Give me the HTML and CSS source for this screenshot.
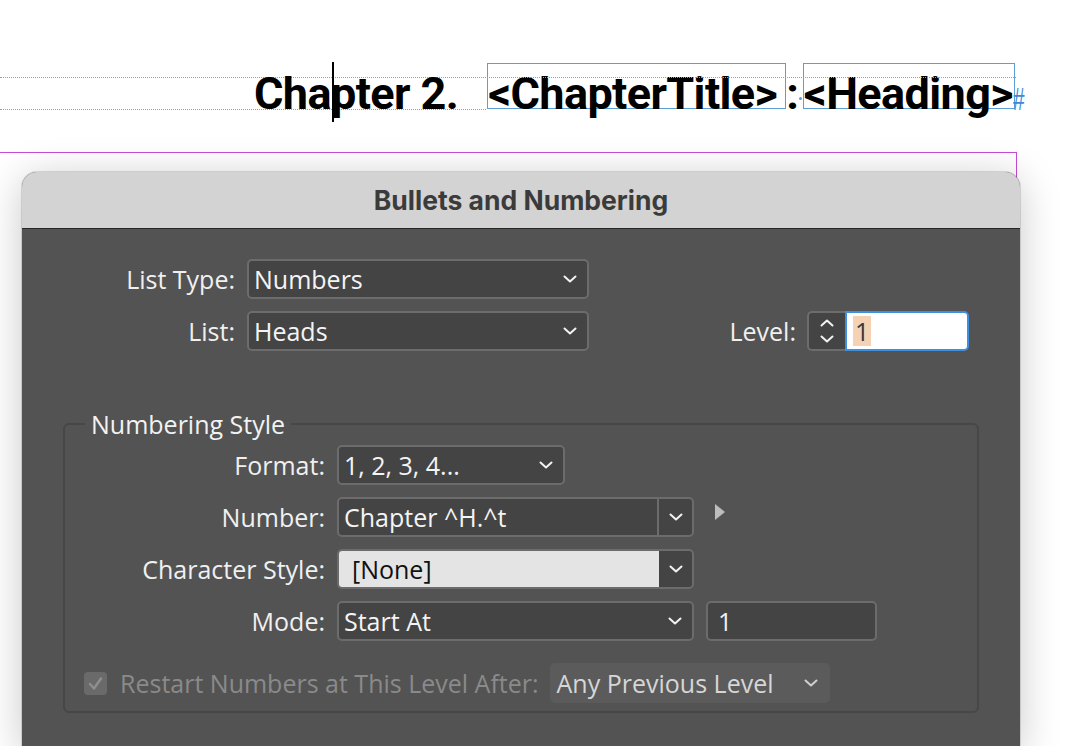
FILE: index.html
```html
<!DOCTYPE html>
<html>
<head>
<meta charset="utf-8">
<link rel="stylesheet" href="styles.css">
</head>
<body>
<div class="canvas">
  <div class="guide guide-top"></div>
  <div class="guide guide-base"></div>
  <div class="heading-line">
    <span class="htext">Cha<span class="caret"></span>pter 2.</span>
    <span class="frame frame-title">&lt;ChapterTitle&gt;</span>
    <span class="htext colon">:</span>
    <span class="dot"></span>
    <span class="frame frame-head">&lt;Heading&gt;</span>
    <span class="hash">#</span>
  </div>
</div>
<div class="margin-frame">
  <div class="dialog">
    <div class="titlebar">Bullets and Numbering</div>
    <div class="body">
      <div class="row">
        <div class="lbl">List Type:</div>
        <div class="select w342"><span>Numbers</span><svg class="chev" width="14" height="8" viewBox="0 0 14 8"><polyline points="1.5,1.5 7,6.5 12.5,1.5"/></svg></div>
      </div>
      <div class="row">
        <div class="lbl">List:</div>
        <div class="select w342"><span>Heads</span><svg class="chev" width="14" height="8" viewBox="0 0 14 8"><polyline points="1.5,1.5 7,6.5 12.5,1.5"/></svg></div>
        <div class="spacer"></div>
        <div class="lbl-inline">Level:</div>
        <div class="stepper">
          <svg width="14" height="8" viewBox="0 0 14 8"><polyline points="1.5,6.5 7,1.5 12.5,6.5"/></svg>
          <svg width="14" height="8" viewBox="0 0 14 8"><polyline points="1.5,1.5 7,6.5 12.5,1.5"/></svg>
        </div>
        <div class="level-input"><span class="sel">1</span></div>
      </div>

      <fieldset class="group">
        <legend>Numbering Style</legend>
        <div class="row">
          <div class="lbl2">Format:</div>
          <div class="select w228"><span>1, 2, 3, 4...</span><svg class="chev" width="14" height="8" viewBox="0 0 14 8"><polyline points="1.5,1.5 7,6.5 12.5,1.5"/></svg></div>
        </div>
        <div class="row">
          <div class="lbl2">Number:</div>
          <div class="combo">
            <div class="combo-field"><span>Chapter ^H.^t</span></div>
            <div class="combo-btn"><svg width="14" height="8" viewBox="0 0 14 8"><polyline points="1.5,1.5 7,6.5 12.5,1.5"/></svg></div>
          </div>
          <svg class="tri" width="10" height="16" viewBox="0 0 10 16"><polygon points="0,0 10,8 0,16"/></svg>
        </div>
        <div class="row">
          <div class="lbl2">Character Style:</div>
          <div class="combo">
            <div class="combo-field light"><span>[None]</span></div>
            <div class="combo-btn"><svg width="14" height="8" viewBox="0 0 14 8"><polyline points="1.5,1.5 7,6.5 12.5,1.5"/></svg></div>
          </div>
        </div>
        <div class="row">
          <div class="lbl2">Mode:</div>
          <div class="select w357"><span>Start At</span><svg class="chev" width="14" height="8" viewBox="0 0 14 8"><polyline points="1.5,1.5 7,6.5 12.5,1.5"/></svg></div>
          <div class="num-input"><span>1</span></div>
        </div>
        <div class="row row-check">
          <div class="checkbox"><svg width="23" height="23" viewBox="0 0 23 23"><polyline points="6,12 10,16.5 17,6.5"/></svg></div>
          <div class="check-label">Restart Numbers at This Level After:</div>
          <div class="select disabled w280"><span>Any Previous Level</span><svg class="chev" width="14" height="8" viewBox="0 0 14 8"><polyline points="1.5,1.5 7,6.5 12.5,1.5"/></svg></div>
        </div>
      </fieldset>
    </div>
  </div>
</div>
</body>
</html>
```

FILE: styles.css
```css
* { box-sizing: border-box; }
html, body { margin: 0; padding: 0; }
body {
  width: 1090px;
  height: 746px;
  overflow: hidden;
  background: #ffffff;
  font-family: "Open Sans", "Liberation Sans", sans-serif;
}

/* document canvas */
.canvas {
  position: relative;
  height: 152px;
  padding-top: 63px;
}
.guide {
  position: absolute;
  left: 0;
  height: 0;
  border-top: 1px dotted #7fa9bf;
}
.guide-top { top: 77px; width: 1016px; }
.guide-base { top: 109px; width: 486px; }

.heading-line {
  display: flex;
  align-items: flex-start;
  padding-left: 254px;
  font-family: Roboto, "Liberation Sans", sans-serif;
  font-weight: 700;
  font-size: 45px;
  letter-spacing: -0.6px;
  color: #000;
  line-height: 54px;
}
.htext {
  position: relative;
  display: block;
  height: 46px;
  padding-top: 4px;
  white-space: pre;
}
.caret {
  position: absolute;
  top: -1px;
  display: inline-block;
  width: 2px;
  height: 60px;
  background: #000;
  margin-left: 1px;
}
.frame {
  display: block;
  height: 46px;
  border: 1px solid #5b9fd6;
  padding-top: 3px;
  white-space: pre;
}
.frame-title { margin-left: 29px; width: 299px; }
.colon { margin-left: 0; letter-spacing: 0; }
.dot {
  display: block;
  width: 3px;
  height: 3px;
  border-radius: 50%;
  background: #5b9fd6;
  margin: 34px 1px 0 0;
}
.frame-head { width: 212px; }
.hash {
  display: block;
  font-family: "Liberation Sans", sans-serif;
  font-weight: 400;
  font-size: 32px;
  line-height: 32px;
  color: #3f88d6;
  margin: 20px 0 0 -2px;
  letter-spacing: 0;
  transform: scaleX(0.65);
  transform-origin: left center;
}

/* margin frame */
.margin-frame {
  width: 1017px;
  height: 594px;
  border-top: 1px solid #c64bd6;
  border-right: 1px solid #c64bd6;
  padding-top: 19px;
}

/* dialog */
.dialog {
  width: 998px;
  margin-left: 22px;
  border-radius: 15px 15px 0 0;
  overflow: hidden;
  box-shadow: 0 6px 40px rgba(0, 0, 0, 0.22), 0 0 0 1px rgba(0,0,0,0.12);
  background: #535353;
}
.titlebar {
  height: 57px;
  background: #d3d3d3;
  border-bottom: 1px solid #262626;
  display: flex;
  align-items: center;
  justify-content: center;
  font-family: Inter, "Liberation Sans", sans-serif;
  font-weight: 700;
  font-size: 26.5px;
  color: #3b3b3b;
}
.body {
  height: 520px;
  padding: 30px 51px 0 0;
  color: #f0f0f0;
  font-size: 25px;
}
.row {
  display: flex;
  align-items: center;
  height: 40px;
  margin-bottom: 12px;
}
.lbl {
  width: 213px;
  margin-right: 12px;
  text-align: right;
}
.spacer { flex: 1; }
.lbl-inline { margin-right: 11px; }

.select {
  height: 40px;
  border: 2px solid #6c6c6c;
  border-radius: 5px;
  background: #444444;
  display: flex;
  align-items: center;
  justify-content: space-between;
  padding: 0 10px 0 5px;
  color: #f4f4f4;
}
.select span { white-space: nowrap; }
svg polyline { fill: none; stroke: #f2f2f2; stroke-width: 2; stroke-linecap: round; stroke-linejoin: round; }
.chev { flex: none; }
.w342 { width: 342px; }
.w228 { width: 228px; }
.w357 { width: 357px; }
.w280 { width: 280px; }

.stepper {
  width: 38px;
  height: 40px;
  border: 2px solid #6c6c6c;
  border-right: none;
  border-radius: 5px 0 0 5px;
  background: #444444;
  display: flex;
  flex-direction: column;
  align-items: center;
  justify-content: center;
  gap: 8px;
}
.level-input {
  width: 124px;
  height: 40px;
  border: 2px solid #3d8fe0;
  border-radius: 0 5px 5px 0;
  background: #ffffff;
  display: flex;
  align-items: center;
  padding-left: 6px;
  color: #3a3a3a;
}
.level-input .sel {
  background: #f6d2b4;
  padding: 0 2px;
  line-height: 30px;
}

/* group */
.group {
  margin: 58px 0 0 41px;
  width: 916px;
  padding: 6px 0 8px 0;
  border: 2px solid #474747;
  border-radius: 6px;
}
.group legend {
  margin-left: 20px;
  padding: 0 6px;
  line-height: 30px;
  color: #f2f2f2;
}
.lbl2 {
  width: 260px;
  margin-right: 12px;
  text-align: right;
}
.combo {
  width: 357px;
  height: 40px;
  border: 2px solid #6c6c6c;
  border-radius: 5px;
  background: #444444;
  display: flex;
  overflow: hidden;
}
.combo-field {
  width: 320px;
  display: flex;
  align-items: center;
  padding-left: 5px;
  border-right: 2px solid #6c6c6c;
  color: #f4f4f4;
  white-space: nowrap;
}
.combo-field.light {
  background: #e4e4e4;
  color: #111;
  padding-left: 13px;
  border-right: none;
}
.combo-btn {
  flex: 1;
  display: flex;
  align-items: center;
  justify-content: center;
}
.tri { margin-left: 21px; margin-top: -10px; }
.tri polygon { fill: #bdbdbd; }
.num-input {
  width: 171px;
  height: 40px;
  margin-left: 12px;
  border: 2px solid #6c6c6c;
  border-radius: 5px;
  background: #444444;
  display: flex;
  align-items: center;
  padding-left: 10px;
}
.row-check { margin: 22px 0 0 0; }
.checkbox {
  width: 23px;
  height: 23px;
  margin-left: 19px;
  border-radius: 4px;
  background: #6a6a6a;
}
.checkbox svg { display: block; }
.checkbox polyline { stroke: #8e8e8e; stroke-width: 2.5; }
.check-label {
  margin-left: 13px;
  margin-right: 11px;
  color: #8a8a8a;
  white-space: nowrap;
}
.select.disabled {
  background: #5b5b5b;
  border-color: #5b5b5b;
  color: #d6d6d6;
}
.select.disabled polyline { stroke: #cfcfcf; }
```
